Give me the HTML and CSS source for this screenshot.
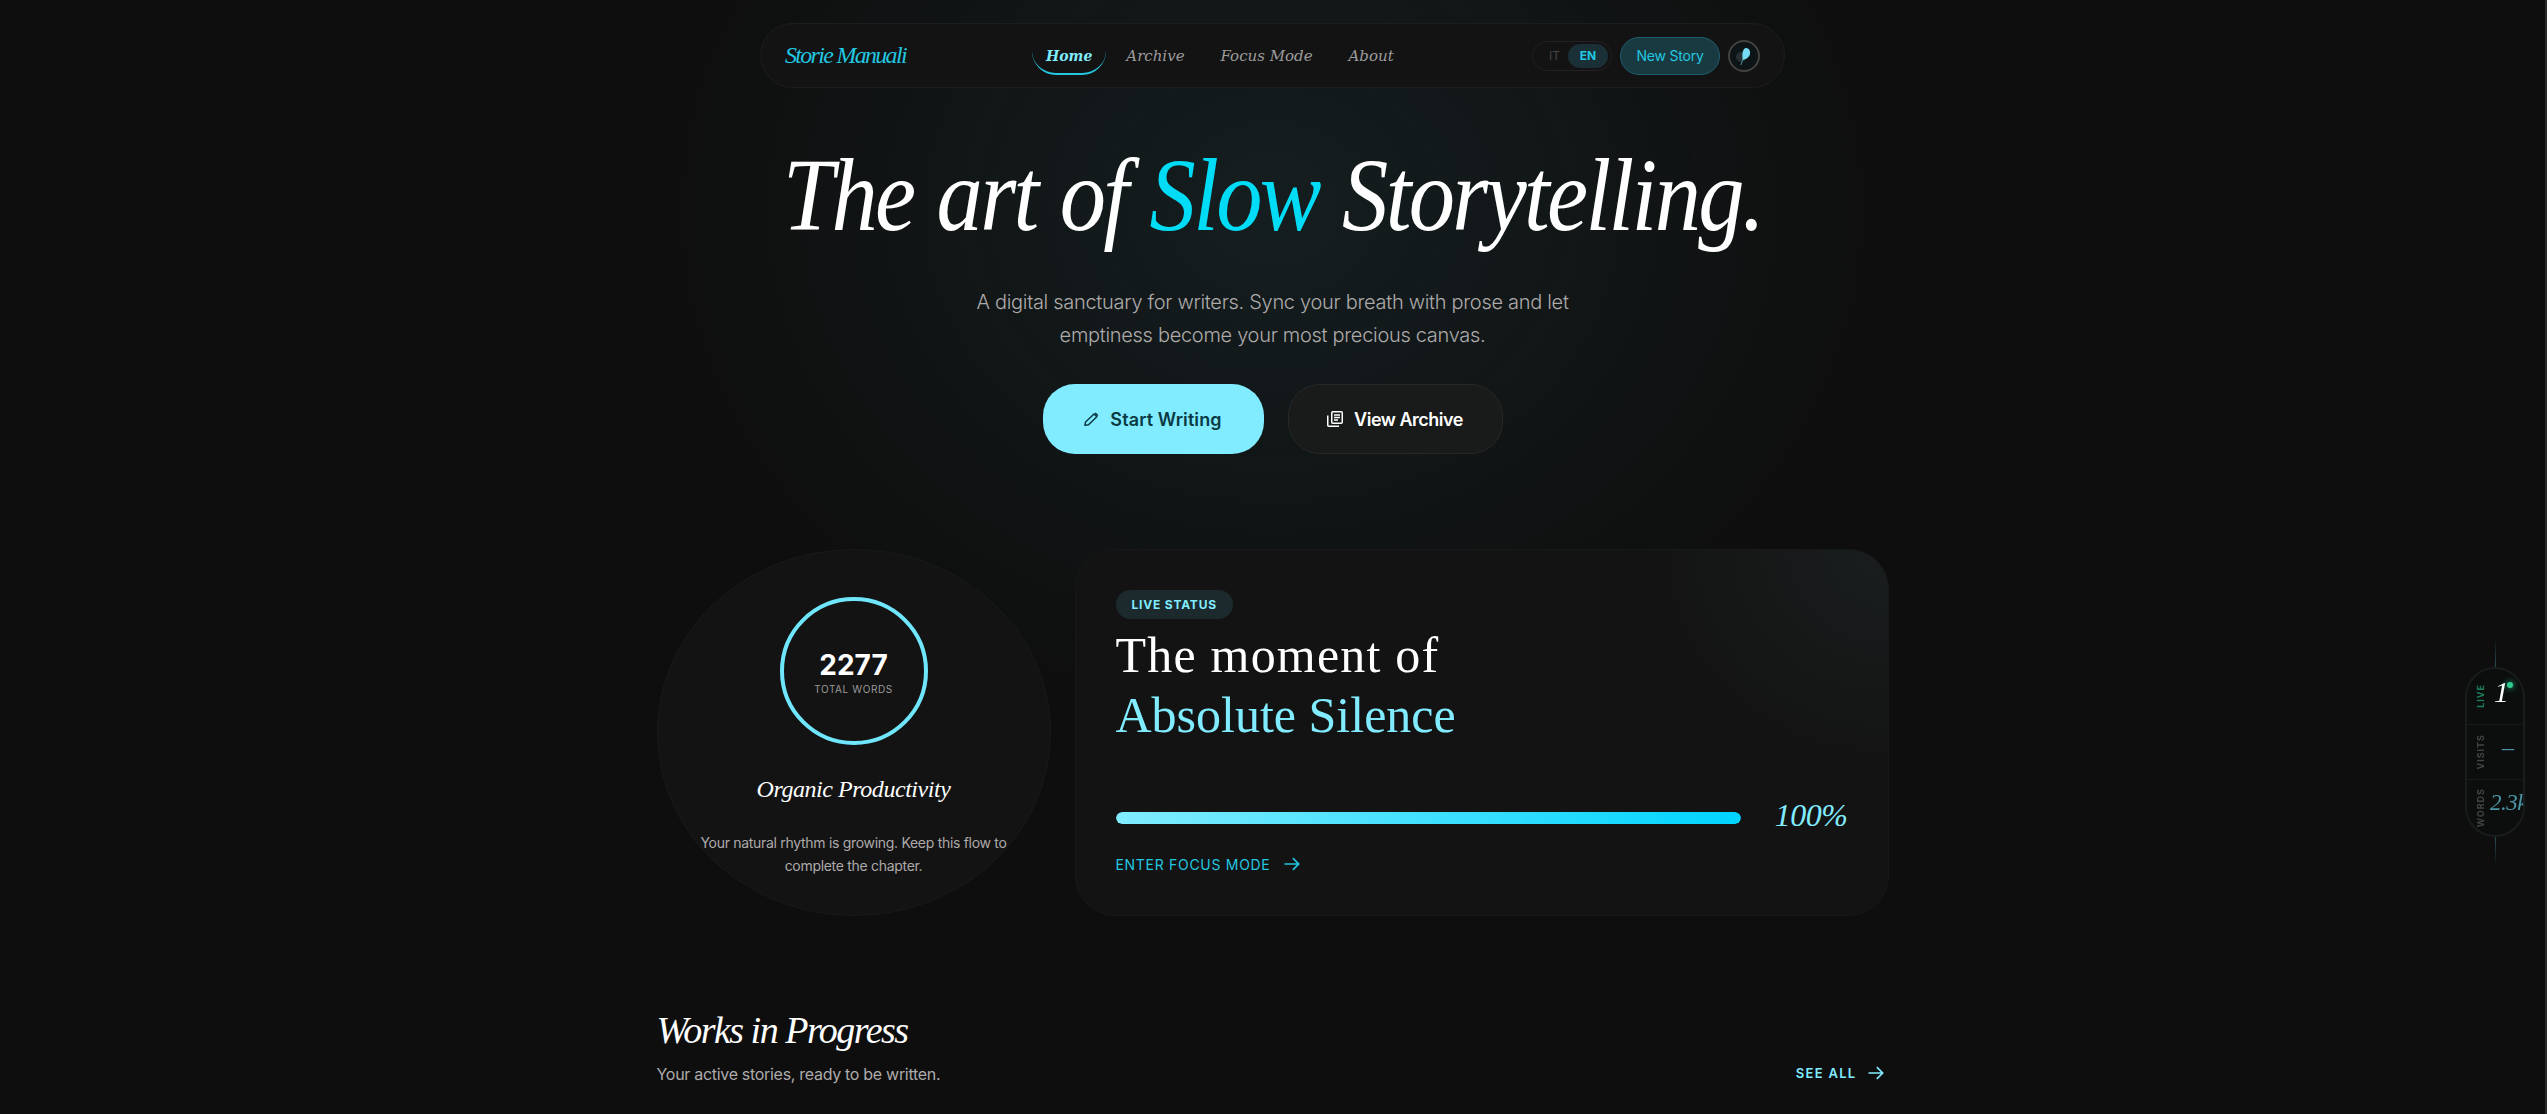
FILE: index.html
```html
<!DOCTYPE html>
<html lang="en">
<head>
  <meta charset="UTF-8" />
  <meta name="viewport" content="width=device-width, initial-scale=1.0" />
  <title>Storie Manuali</title>
  <link rel="stylesheet" href="styles.css">
</head>
<body>

  <!-- Top Nav -->
  <nav class="nav">
    <a class="logo">Storie Manuali</a>
    <div class="nav-links">
      <a class="nav-link active">Home</a>
      <a class="nav-link">Archive</a>
      <a class="nav-link">Focus Mode</a>
      <a class="nav-link">About</a>
    </div>
    <div class="nav-actions">
      <div class="lang">
        <span class="lang-off">IT</span>
        <span class="lang-on">EN</span>
      </div>
      <button class="new-story">New Story</button>
      <div class="avatar">
        <svg viewBox="0 0 28 28" width="28" height="28">
          <circle cx="11" cy="15" r="5" fill="#263033"/>
          <path d="M16 6C19 6 20.500 9 20 12C19.500 15 16 17.500 12.500 18C12.500 14 12 11 13 9C13.500 7.500 14.500 6 16 6Z" fill="#74dcf4"/>
          <path d="M12.500 18L11 23" stroke="#4b8b98" stroke-width="1" fill="none"/>
        </svg>
      </div>
    </div>
  </nav>

  <!-- Hero -->
  <header class="hero">
    <h1>The art of <span class="accent">Slow</span> Storytelling.</h1>
    <p>A digital sanctuary for writers. Sync your breath with prose and let<br>emptiness become your most precious canvas.</p>
    <div class="hero-btns">
      <button class="btn btn-primary">
        <svg viewBox="0 0 15 14" width="15" height="14" fill="none" stroke="currentColor" stroke-width="1.500">
          <path d="M1 13.200L1.500 10L10 2L12.800 4.800L4.500 12.700Z"/>
          <path d="M10.500 1.500L11.700 .500L14.300 3L13.200 4.300Z" fill="currentColor" stroke="none"/>
        </svg>
        Start Writing
      </button>
      <button class="btn btn-ghost">
        <svg viewBox="0 0 16 16" width="16" height="16" fill="none" stroke="currentColor" stroke-width="1.500">
          <rect x="4.750" y=".750" width="10.500" height="11.500" rx="1"/>
          <path d="M.750 4.500V14.250A1 1 0 0 0 1.750 15.250H12"/>
          <path d="M7 4H13M7 6.500H13M7 9H11"/>
        </svg>
        View Archive
      </button>
    </div>
  </header>

  <main class="main">
    <!-- Stats -->
    <section class="stats">
      <div class="organic">
        <div class="ring">
          <span class="ring-num">2277</span>
          <span class="ring-label">TOTAL WORDS</span>
        </div>
        <h3>Organic Productivity</h3>
        <p>Your natural rhythm is growing. Keep this flow to complete the chapter.</p>
      </div>

      <div class="status">
        <span class="pill">LIVE STATUS</span>
        <h2><span class="status-first">The moment of</span><br><span class="status-accent">Absolute Silence</span></h2>
        <div class="progress-row">
          <div class="progress"><div class="progress-fill" style="width: 100%"></div></div>
          <span class="progress-val">100%</span>
        </div>
        <a class="focus-link">ENTER FOCUS MODE
          <svg viewBox="0 0 24 24" width="20" height="20" fill="none" stroke="currentColor" stroke-width="2">
            <path d="M3 12h17M13 5l7 7-7 7"/>
          </svg>
        </a>
      </div>
    </section>

    <!-- Works -->
    <section class="works">
      <div>
        <h2>Works in Progress</h2>
        <p>Your active stories, ready to be written.</p>
      </div>
      <a class="see-all">SEE ALL
        <svg viewBox="0 0 24 24" width="20" height="20" fill="none" stroke="currentColor" stroke-width="2">
          <path d="M3 12h17M13 5l7 7-7 7"/>
        </svg>
      </a>
    </section>
  </main>

  <!-- Side widget -->
  <aside class="side">
    <div class="side-cell">
      <span class="side-label live">LIVE</span>
      <span class="side-val white">1<i class="dot"></i></span>
    </div>
    <div class="side-cell">
      <span class="side-label">VISITS</span>
      <span class="side-val dash">–</span>
    </div>
    <div class="side-cell">
      <span class="side-label">WORDS</span>
      <span class="side-val words">2.3k</span>
    </div>
  </aside>

</body>
</html>
```

FILE: styles.css
```css
:root {
  --primary: #81ecff;
  --cyan: #22c7e0;
  --bright: #00dcf5;
  --bg: #0e0e0e;
  --card: #131313;
  --line: #1c1e1e;
  --muted: #adaaaa;
}

* {
  margin: 0;
  padding: 0;
  box-sizing: border-box;
}

html,
body {
  height: 100%;
  overflow: hidden;
}

/* thin scrollbar track on the right */
html {
  border-right: 2px solid #2b2b2b;
}

body {
  font-family: Inter, 'Open Sans', sans-serif;
  color: #fff;
  background:
    radial-gradient(ellipse 620px 520px at 50% 210px, rgba(34, 60, 66, 0.34), transparent 100%),
    var(--bg);
  padding-top: 23px;
}

button {
  font-family: inherit;
  border: none;
}

.nav {
  width: 1025px;
  height: 65px;
  margin: 0 auto;
  padding: 0 24px;
  display: flex;
  align-items: center;
  background: var(--card);
  border: 1px solid var(--line);
  border-radius: 33px;
}

.logo {
  width: 247px;
  font-family: 'Liberation Serif', serif;
  font-style: italic;
  font-size: 24px;
  letter-spacing: -1.7px;
  color: var(--cyan);
}

.nav-links {
  display: flex;
  align-items: center;
}

.nav-link {
  padding: 0 18px;
  font-family: 'DejaVu Serif', serif;
  font-style: italic;
  font-size: 15px;
  color: #9c9c9c;
}

.nav-link.active {
  margin-right: 2px;
  font-size: 14px;
  font-weight: 700;
  color: var(--primary);
  padding: 12px 14px 9px;
  border-bottom: 2px solid var(--cyan);
  border-radius: 0 0 24px 24px;
}

.nav-actions {
  margin-left: auto;
  display: flex;
  align-items: center;
  gap: 8px;
}

.lang {
  width: 80px;
  height: 30px;
  padding: 2px 3px;
  display: flex;
  align-items: center;
  justify-content: space-between;
  border: 1px solid #222;
  border-radius: 15px;
  font-size: 12px;
}

.lang-off {
  margin-left: 13px;
  color: #444;
}

.lang-on {
  width: 40px;
  height: 24px;
  line-height: 24px;
  text-align: center;
  font-weight: 700;
  color: var(--cyan);
  background: #1a3036;
  border-radius: 12px;
}

.new-story {
  width: 100px;
  height: 38px;
  font-size: 14px;
  letter-spacing: -0.2px;
  color: var(--cyan);
  background: #1a3a42;
  border: 1px solid #1d5d6c;
  border-radius: 19px;
}

.avatar {
  width: 32px;
  height: 32px;
  display: flex;
  align-items: center;
  justify-content: center;
  background: #0d1517;
  border: 2px solid #424242;
  border-radius: 50%;
}

.hero {
  text-align: center;
}

.hero h1 {
  margin-top: 52px;
  font-family: 'Liberation Serif', serif;
  font-style: italic;
  font-weight: 400;
  font-size: 104px;
  line-height: 110px;
  letter-spacing: -3px;
  word-spacing: 3px;
  transform: scaleX(0.89);
}

.accent {
  color: var(--bright);
}

.hero p {
  margin-top: 36px;
  font-size: 20px;
  font-weight: 300;
  line-height: 33px;
  letter-spacing: -0.3px;
  color: var(--muted);
}

.hero-btns {
  margin-top: 32px;
  display: flex;
  justify-content: center;
  gap: 24px;
}

.btn {
  height: 70px;
  display: flex;
  align-items: center;
  justify-content: center;
  gap: 11px;
  font-size: 18px;
  font-weight: 600;
  border-radius: 32px;
}

.btn-primary {
  width: 221px;
  letter-spacing: 0.1px;
  color: #0a3a44;
  background: var(--primary);
}

.btn-ghost {
  width: 215px;
  letter-spacing: -0.5px;
  color: #fff;
  background: #191a1a;
  border: 1px solid #262828;
}

.main {
  width: 1232px;
  margin: 95px auto 0;
}

.stats {
  display: grid;
  grid-template-columns: 394px 814px;
  gap: 24px;
  height: 367px;
}

.organic {
  display: flex;
  flex-direction: column;
  align-items: center;
  text-align: center;
  padding-top: 47px;
  background: var(--card);
  border: 1px solid #181a1a;
  border-radius: 50%;
}

.ring {
  width: 148px;
  height: 148px;
  display: flex;
  flex-direction: column;
  align-items: center;
  justify-content: center;
  border: 4px solid #6fe6fc;
  border-radius: 50%;
}

.ring-num {
  font-size: 28px;
  font-weight: 700;
  line-height: 36px;
}

.ring-label {
  font-size: 10px;
  letter-spacing: 0.6px;
  color: #9a9a9a;
}

.organic h3 {
  margin-top: 28px;
  font-family: 'Liberation Serif', serif;
  font-style: italic;
  font-weight: 400;
  font-size: 24px;
  line-height: 32px;
  letter-spacing: -0.45px;
}

.organic p {
  margin-top: 26px;
  width: 330px;
  font-size: 14px;
  line-height: 23px;
  letter-spacing: -0.3px;
  color: var(--muted);
}

.status {
  padding: 40px;
  background: radial-gradient(ellipse 240px 220px at 100% 0, #1a1e1f, transparent), var(--card);
  border: 1px solid #171919;
  border-radius: 40px;
}

.pill {
  display: inline-block;
  height: 29px;
  padding: 0 16px;
  line-height: 29px;
  font-size: 12px;
  font-weight: 700;
  letter-spacing: 0.8px;
  color: var(--primary);
  background: #1c2a2d;
  border-radius: 15px;
}

.status h2 {
  margin-top: 6px;
  font-family: 'Liberation Serif', serif;
  font-weight: 400;
  font-size: 50px;
  line-height: 60px;
}

.status-first {
  letter-spacing: 1.2px;
}

.status-accent {
  color: var(--primary);
}

.progress-row {
  margin-top: 52px;
  display: flex;
  align-items: center;
  gap: 34px;
}

.progress {
  flex: 1;
  height: 12px;
  margin-top: 6px;
  border-radius: 6px;
  background: #222;
  overflow: hidden;
}

.progress-fill {
  height: 100%;
  border-radius: 6px;
  background: linear-gradient(90deg, var(--primary), #00d4ff);
}

.progress-val {
  font-family: 'Liberation Serif', serif;
  font-style: italic;
  font-size: 32px;
  line-height: 36px;
  letter-spacing: -0.5px;
  color: var(--primary);
}

.focus-link {
  margin-top: 21px;
  display: flex;
  align-items: center;
  gap: 12px;
  font-size: 14px;
  letter-spacing: 0.7px;
  color: var(--cyan);
}

.works {
  margin-top: 92px;
  display: flex;
  justify-content: space-between;
  align-items: flex-end;
}

.works h2 {
  font-family: 'Liberation Serif', serif;
  font-style: italic;
  font-weight: 400;
  font-size: 38px;
  line-height: 44px;
  letter-spacing: -1.5px;
}

.works p {
  margin-top: 10px;
  font-size: 16px;
  line-height: 24px;
  letter-spacing: -0.3px;
  color: var(--muted);
}

.see-all {
  margin: 0 3px 3px 0;
  display: flex;
  align-items: center;
  gap: 9px;
  font-size: 13px;
  font-weight: 600;
  letter-spacing: 1.3px;
  color: var(--primary);
}

/* fixed widget on the right edge */
.side {
  position: fixed;
  top: 667px;
  left: 2465px;
  width: 60px;
  height: 170px;
  display: flex;
  flex-direction: column;
  background: #0c0e0e;
  border: 2px solid #181c1c;
  border-radius: 30px;
  overflow: hidden;
}

.side::before,
.side::after {
  content: "";
  position: fixed;
  left: 2495px;
  width: 1px;
  height: 30px;
}

.side::before {
  top: 637px;
  background: linear-gradient(transparent, #2c4c52);
}

.side::after {
  top: 837px;
  background: linear-gradient(#2c4c52, transparent);
}

.side-cell {
  flex: 1;
  display: flex;
  align-items: center;
  padding-left: 8px;
  gap: 6px;
  border-bottom: 1px solid #181b1b;
}

.side-cell:last-child {
  border-bottom: none;
}

.side-label {
  writing-mode: vertical-rl;
  transform: rotate(180deg);
  font-size: 9px;
  font-weight: 700;
  letter-spacing: 1px;
  color: #444;
}

.side-label.live {
  color: #1c7c5c;
}

.side-val {
  position: relative;
  margin-bottom: 9px;
  font-family: 'Liberation Serif', serif;
  font-style: italic;
  font-size: 24px;
  color: #4a95a5;
  white-space: nowrap;
}

.side-val.white {
  margin-left: 2px;
  font-size: 30px;
  color: #fff;
}

.side-val.dash {
  margin-left: 10px;
}

.side-val.words {
  margin-left: -2px;
  font-size: 23px;
  letter-spacing: -0.5px;
}

.dot {
  position: absolute;
  top: 7px;
  left: 13px;
  width: 6px;
  height: 6px;
  background: #2ecc8f;
  border-radius: 50%;
  box-shadow: 0 0 6px #2ecc8f;
}
```
